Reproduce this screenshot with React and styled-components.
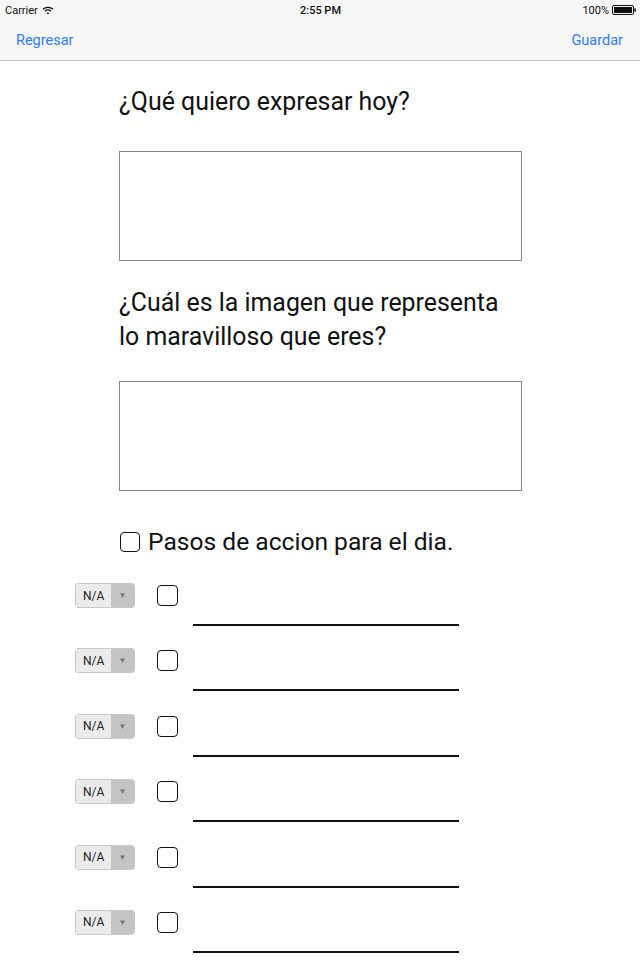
import React from "react";
import styled, { createGlobalStyle } from "styled-components";

const Global = createGlobalStyle`
  html, body { margin: 0; padding: 0; background: #ffffff; }
  body { font-family: Roboto, "Liberation Sans", sans-serif; color: #111; }
`;

const Screen = styled.div`
  width: 640px;
  height: 960px;
  overflow: hidden;
  background: #fff;
  display: flex;
  flex-direction: column;
  & > * { flex-shrink: 0; }
`;

const Header = styled.header`
  background: #f7f7f7;
  border-bottom: 1px solid #c4c4c4;
  height: 61px;
  box-sizing: border-box;
  display: flex;
  flex-direction: column;
`;

const StatusBar = styled.div`
  height: 20px;
  display: grid;
  grid-template-columns: 1fr auto 1fr;
  align-items: center;
  padding: 0 4px 0 5px;
  font-size: 11px;
  color: #111;
`;

const StatusLeft = styled.div`
  display: flex;
  align-items: center;
  gap: 4px;
`;

const StatusRight = styled.div`
  display: flex;
  align-items: center;
  justify-content: flex-end;
  gap: 3px;
`;

const Time = styled.div`
  font-weight: 500;
`;

const NavBar = styled.nav`
  flex: 1;
  display: flex;
  align-items: center;
  justify-content: space-between;
  padding: 0 17px 0 16px;
`;

const NavButton = styled.span`
  color: #2f7cf6;
  font-size: 14.5px;
`;

const Content = styled.main`
  display: flex;
  flex-direction: column;
  padding-left: 119px;
  padding-top: 24px;
`;

const Question = styled.h2`
  margin: 0;
  font-weight: 400;
  font-size: 24.9px;
  line-height: 34px;
  color: #111;
  width: 400px;
`;

const TextBox = styled.div`
  width: 401px;
  height: 108px;
  border: 1px solid #8a8a8a;
  margin-top: ${(p) => p.$top}px;
  margin-bottom: ${(p) => p.$bottom}px;
`;

const StepsHeader = styled.div`
  display: flex;
  align-items: center;
  gap: 8px;
  margin-top: 36px;
  font-size: 24.6px;
  line-height: 30px;
  padding-left: 1px;
`;

const Check = styled.span`
  display: inline-block;
  width: ${(p) => p.$size}px;
  height: ${(p) => p.$size}px;
  box-sizing: border-box;
  border: 1.5px solid #111;
  border-radius: 4px;
  flex-shrink: 0;
`;

const Rows = styled.div`
  display: flex;
  flex-direction: column;
  margin-top: 26px;
  padding-left: 75px;
`;

const Row = styled.div`
  height: 65.4px;
  display: flex;
  align-items: flex-start;
`;

const Select = styled.div`
  width: 60px;
  height: 25px;
  box-sizing: border-box;
  border: 1px solid #c9c9c9;
  border-radius: 3px;
  display: flex;
  overflow: hidden;
  font-size: 12px;
  color: #222;
`;

const SelectLabel = styled.span`
  flex: 1;
  background: #ebebeb;
  display: flex;
  align-items: center;
  padding-left: 7px;
`;

const SelectArrow = styled.span`
  width: 23px;
  background: #c4c4c4;
  display: flex;
  align-items: center;
  justify-content: center;
  color: #777;
  font-size: 8px;
`;

const RowCheck = styled(Check)`
  margin-left: 22px;
  margin-top: 2px;
`;

const Line = styled.div`
  width: 266px;
  height: 41px;
  border-bottom: 2px solid #111;
  margin-left: 15px;
`;

const Wifi = () => (
  <svg width="12" height="9" viewBox="0 0 12 9">
    <path d="M1 3.2 A7.5 7.5 0 0 1 11 3.2" fill="none" stroke="#111" strokeWidth="1.3" />
    <path d="M2.9 5.2 A4.8 4.8 0 0 1 9.1 5.2" fill="none" stroke="#111" strokeWidth="1.3" />
    <path d="M4.6 7 L6 8.6 L7.4 7 A2.2 2.2 0 0 0 4.6 7 Z" fill="#111" />
  </svg>
);

const Battery = () => (
  <svg width="24" height="10" viewBox="0 0 24 10">
    <rect x="0.5" y="0.5" width="21" height="9" rx="1.5" fill="none" stroke="#111" />
    <rect x="2" y="2" width="18" height="6" fill="#111" />
    <rect x="22.3" y="3.2" width="1.5" height="3.6" rx="0.5" fill="#111" />
  </svg>
);

export default function App() {
  const rows = [0, 1, 2, 3, 4, 5];
  return (
    <>
      <Global />
      <Screen>
        <Header>
          <StatusBar>
            <StatusLeft>
              <span>Carrier</span>
              <Wifi />
            </StatusLeft>
            <Time>2:55 PM</Time>
            <StatusRight>
              <span>100%</span>
              <Battery />
            </StatusRight>
          </StatusBar>
          <NavBar>
            <NavButton>Regresar</NavButton>
            <NavButton>Guardar</NavButton>
          </NavBar>
        </Header>
        <Content>
          <Question>¿Qué quiero expresar hoy?</Question>
          <TextBox $top={32} $bottom={25} />
          <Question>¿Cuál es la imagen que representa lo maravilloso que eres?</Question>
          <TextBox $top={27} $bottom={0} />
          <StepsHeader>
            <Check $size={20} />
            <span>Pasos de accion para el dia.</span>
          </StepsHeader>
        </Content>
        <Rows>
          {rows.map((r) => (
            <Row key={r}>
              <Select>
                <SelectLabel>N/A</SelectLabel>
                <SelectArrow>▼</SelectArrow>
              </Select>
              <RowCheck $size={21} />
              <Line />
            </Row>
          ))}
        </Rows>
      </Screen>
    </>
  );
}
